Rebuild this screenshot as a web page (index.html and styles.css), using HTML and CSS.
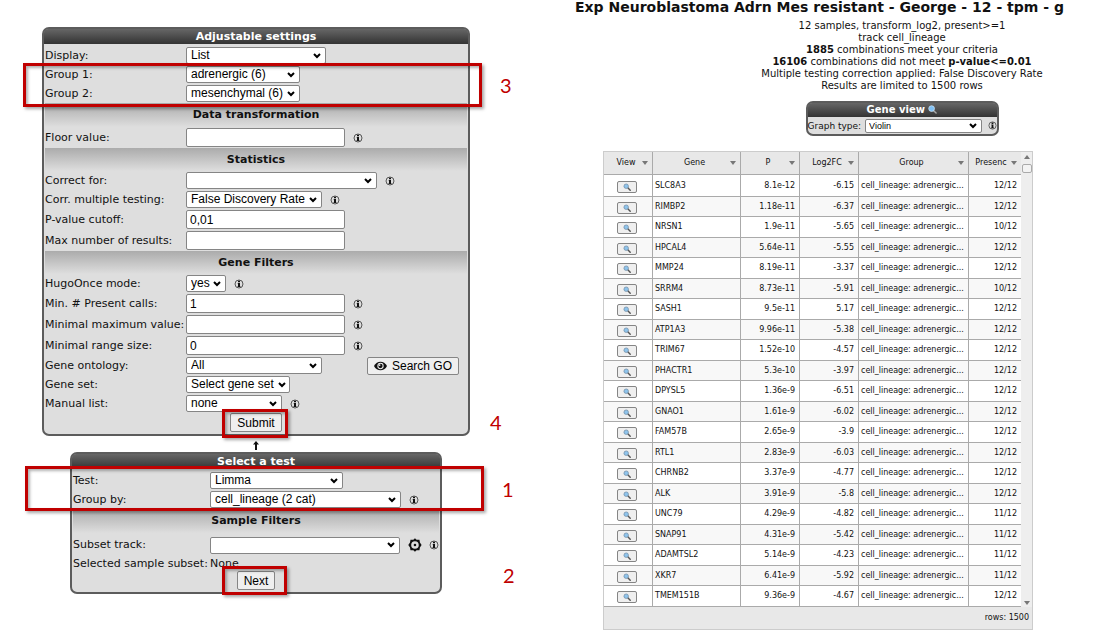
FILE: index.html
```html
<!DOCTYPE html>
<html lang="en">
<head>
<meta charset="utf-8">
<title>Exp Neuroblastoma Adrn Mes resistant</title>
<link rel="stylesheet" href="styles.css">
</head>
<body>
<svg class="defs" aria-hidden="true">
  <symbol id="info" viewBox="0 0 10 10"><circle cx="5" cy="5" r="4" fill="none" stroke="#555" stroke-width="1"/><path d="M4 1.800h2v1.400H4zM3.700 4H6v3.300h.5V8h-3v-.7H4V4.700h-.3z" fill="#111"/></symbol>
  <symbol id="lens" viewBox="0 0 10 10"><path d="M6 6l3 3" stroke="#555" stroke-width="1.800" stroke-linecap="round"/><circle cx="4" cy="4" r="2.800" fill="#8fc4ec" stroke="#6f8ba3" stroke-width=".9"/></symbol>
  <symbol id="lens-light" viewBox="0 0 10 10"><path d="M6 6l3 3" stroke="#a8a8a8" stroke-width="1.600" stroke-linecap="round"/><circle cx="4" cy="4" r="3.200" fill="#7fc0f4" stroke="#cfe4f5" stroke-width=".8"/></symbol>
</svg>
<main class="page">
  <div class="left">
    <form class="panel settings">
      <h2 class="panel-title">Adjustable settings</h2>
      <div class="rows">
        <div class="row"><label for="display">Display:</label><select id="display" class="w140"><option>List</option></select></div>
        <div class="row"><label for="g1">Group 1:</label><select id="g1" class="w114"><option>adrenergic (6)</option></select></div>
        <div class="row"><label for="g2">Group 2:</label><select id="g2" class="w114"><option>mesenchymal (6)</option></select></div>
        <h3 class="after-mark">Data transformation</h3>
        <div class="row tall"><label for="floor">Floor value:</label><input id="floor" type="text"><svg class="info"><use href="#info"/></svg></div>
        <h3>Statistics</h3>
        <div class="row"><label for="correct">Correct for:</label><select id="correct" class="w191"><option></option></select><svg class="info"><use href="#info"/></svg></div>
        <div class="row"><label for="corr">Corr. multiple testing:</label><select id="corr" class="w136"><option>False Discovery Rate</option></select><svg class="info"><use href="#info"/></svg></div>
        <div class="row tall"><label for="pval">P-value cutoff:</label><input id="pval" type="text" value="0,01"></div>
        <div class="row tall"><label for="max">Max number of results:</label><input id="max" type="text"></div>
        <h3>Gene Filters</h3>
        <div class="row"><label for="hugo">HugoOnce mode:</label><select id="hugo" class="w40"><option>yes</option></select><svg class="info"><use href="#info"/></svg></div>
        <div class="row tall"><label for="calls">Min. # Present calls:</label><input id="calls" type="text" value="1"><svg class="info"><use href="#info"/></svg></div>
        <div class="row tall"><label for="minmax">Minimal maximum value:</label><input id="minmax" type="text"><svg class="info"><use href="#info"/></svg></div>
        <div class="row tall"><label for="range">Minimal range size:</label><input id="range" type="text" value="0"><svg class="info"><use href="#info"/></svg></div>
        <div class="row"><label for="go">Gene ontology:</label><select id="go" class="w136"><option>All</option></select>
          <button type="button" class="search"><svg viewBox="0 0 14 10"><path d="M0 5C3-1.200 11-1.200 14 5 11 11.200 3 11.200 0 5z" fill="#111"/><circle cx="7" cy="5" r="3.400" fill="#eee"/><circle cx="7" cy="5" r="2.300" fill="#111"/><circle cx="6" cy="4" r="1" fill="#eee"/></svg>Search GO</button></div>
        <div class="row"><label for="set">Gene set:</label><select id="set" class="w104"><option>Select gene set</option></select></div>
        <div class="row"><label for="manual">Manual list:</label><select id="manual" class="w96"><option>none</option></select><svg class="info"><use href="#info"/></svg></div>
        <div class="actions"><button type="submit">Submit</button></div>
      </div>
      <div class="mark mark-groups"><span>3</span></div>
      <div class="mark mark-submit"><span>4</span></div>
    </form>
    <svg class="arrow" viewBox="0 0 6 9"><path d="M3 0l3 3.500H4V9H2V3.500H0z" fill="#111"/></svg>
    <form class="panel test">
      <h2 class="panel-title">Select a test</h2>
      <div class="rows">
        <div class="row"><label for="test">Test:</label><select id="test" class="w133"><option>Limma</option></select></div>
        <div class="row"><label for="by">Group by:</label><select id="by" class="w191"><option>cell_lineage (2 cat)</option></select><svg class="info"><use href="#info"/></svg></div>
        <h3 class="after-mark">Sample Filters</h3>
        <div class="row subset"><label for="subset">Subset track:</label><select id="subset" class="w191"><option></option></select>
          <svg class="gear" viewBox="0 0 14 14"><path d="M7 .3l1.600 1.500 2.900 0 .5 2.800L13.700 7l-1.700 2.400-.5 2.800-2.900 0L7 13.700l-1.600-1.500-2.900 0L2 9.400.3 7 2 4.600l.5-2.800 2.900 0z" fill="#111"/><circle cx="7" cy="7" r="3.800" fill="#ddd"/><circle cx="7" cy="7" r="1.300" fill="#111"/></svg>
          <svg class="info near"><use href="#info"/></svg></div>
        <div class="row short"><span class="name">Selected sample subset:</span><span>None</span></div>
        <div class="actions"><button type="submit">Next</button></div>
      </div>
      <div class="mark mark-test"><span>1</span></div>
      <div class="mark mark-next"><span>2</span></div>
    </form>
  </div>
  <section class="right">
    <h1>Exp Neuroblastoma Adrn Mes resistant - George - 12 - tpm - g</h1>
    <div class="summary">
      <p>12 samples, transform_log2, present&gt;=1<br>track cell_lineage<br><b>1885</b> combinations meet your criteria<br><b>16106</b> combinations did not meet <b>p-value&lt;=0.01</b><br>Multiple testing correction applied: False Discovery Rate<br>Results are limited to 1500 rows</p>
      <div class="panel view">
        <h2 class="panel-title">Gene view <svg class="lens"><use href="#lens-light"/></svg></h2>
        <div class="row"><label for="graph">Graph type:</label><select id="graph"><option>Violin</option></select><svg class="info"><use href="#info"/></svg></div>
      </div>
    </div>
    <div class="grid">
      <div class="grid-body">
        <table>
          <colgroup><col class="c-view"><col class="c-gene"><col class="c-num"><col class="c-num"><col class="c-group"><col class="c-pres"></colgroup>
          <thead><tr><th><div>View</div></th><th><div>Gene</div></th><th><div>P</div></th><th><div>Log2FC</div></th><th><div>Group</div></th><th><div>Presenc</div></th></tr></thead>
          <tbody>
<tr><td><button aria-label="View"><svg><use href="#lens"/></svg></button></td><td>SLC8A3</td><td>8.1e-12</td><td>-6.15</td><td>cell_lineage: adrenergic...</td><td>12/12</td></tr>
<tr><td><button aria-label="View"><svg><use href="#lens"/></svg></button></td><td>RIMBP2</td><td>1.18e-11</td><td>-6.37</td><td>cell_lineage: adrenergic...</td><td>12/12</td></tr>
<tr><td><button aria-label="View"><svg><use href="#lens"/></svg></button></td><td>NRSN1</td><td>1.9e-11</td><td>-5.65</td><td>cell_lineage: adrenergic...</td><td>10/12</td></tr>
<tr><td><button aria-label="View"><svg><use href="#lens"/></svg></button></td><td>HPCAL4</td><td>5.64e-11</td><td>-5.55</td><td>cell_lineage: adrenergic...</td><td>12/12</td></tr>
<tr><td><button aria-label="View"><svg><use href="#lens"/></svg></button></td><td>MMP24</td><td>8.19e-11</td><td>-3.37</td><td>cell_lineage: adrenergic...</td><td>12/12</td></tr>
<tr><td><button aria-label="View"><svg><use href="#lens"/></svg></button></td><td>SRRM4</td><td>8.73e-11</td><td>-5.91</td><td>cell_lineage: adrenergic...</td><td>10/12</td></tr>
<tr><td><button aria-label="View"><svg><use href="#lens"/></svg></button></td><td>SASH1</td><td>9.5e-11</td><td>5.17</td><td>cell_lineage: adrenergic...</td><td>12/12</td></tr>
<tr><td><button aria-label="View"><svg><use href="#lens"/></svg></button></td><td>ATP1A3</td><td>9.96e-11</td><td>-5.38</td><td>cell_lineage: adrenergic...</td><td>12/12</td></tr>
<tr><td><button aria-label="View"><svg><use href="#lens"/></svg></button></td><td>TRIM67</td><td>1.52e-10</td><td>-4.57</td><td>cell_lineage: adrenergic...</td><td>12/12</td></tr>
<tr><td><button aria-label="View"><svg><use href="#lens"/></svg></button></td><td>PHACTR1</td><td>5.3e-10</td><td>-3.97</td><td>cell_lineage: adrenergic...</td><td>12/12</td></tr>
<tr><td><button aria-label="View"><svg><use href="#lens"/></svg></button></td><td>DPYSL5</td><td>1.36e-9</td><td>-6.51</td><td>cell_lineage: adrenergic...</td><td>12/12</td></tr>
<tr><td><button aria-label="View"><svg><use href="#lens"/></svg></button></td><td>GNAO1</td><td>1.61e-9</td><td>-6.02</td><td>cell_lineage: adrenergic...</td><td>12/12</td></tr>
<tr><td><button aria-label="View"><svg><use href="#lens"/></svg></button></td><td>FAM57B</td><td>2.65e-9</td><td>-3.9</td><td>cell_lineage: adrenergic...</td><td>12/12</td></tr>
<tr><td><button aria-label="View"><svg><use href="#lens"/></svg></button></td><td>RTL1</td><td>2.83e-9</td><td>-6.03</td><td>cell_lineage: adrenergic...</td><td>12/12</td></tr>
<tr><td><button aria-label="View"><svg><use href="#lens"/></svg></button></td><td>CHRNB2</td><td>3.37e-9</td><td>-4.77</td><td>cell_lineage: adrenergic...</td><td>12/12</td></tr>
<tr><td><button aria-label="View"><svg><use href="#lens"/></svg></button></td><td>ALK</td><td>3.91e-9</td><td>-5.8</td><td>cell_lineage: adrenergic...</td><td>12/12</td></tr>
<tr><td><button aria-label="View"><svg><use href="#lens"/></svg></button></td><td>UNC79</td><td>4.29e-9</td><td>-4.82</td><td>cell_lineage: adrenergic...</td><td>11/12</td></tr>
<tr><td><button aria-label="View"><svg><use href="#lens"/></svg></button></td><td>SNAP91</td><td>4.31e-9</td><td>-5.42</td><td>cell_lineage: adrenergic...</td><td>11/12</td></tr>
<tr><td><button aria-label="View"><svg><use href="#lens"/></svg></button></td><td>ADAMTSL2</td><td>5.14e-9</td><td>-4.23</td><td>cell_lineage: adrenergic...</td><td>11/12</td></tr>
<tr><td><button aria-label="View"><svg><use href="#lens"/></svg></button></td><td>XKR7</td><td>6.41e-9</td><td>-5.92</td><td>cell_lineage: adrenergic...</td><td>11/12</td></tr>
<tr><td><button aria-label="View"><svg><use href="#lens"/></svg></button></td><td>TMEM151B</td><td>9.36e-9</td><td>-4.67</td><td>cell_lineage: adrenergic...</td><td>12/12</td></tr>
          </tbody>
        </table>
        <div class="scroll"><i class="up"></i><i class="thumb"></i><i class="down"></i></div>
      </div>
      <div class="grid-foot">rows: 1500</div>
    </div>
  </section>
</main>
</body>
</html>
```
FILE: styles.css
```css
* { box-sizing: border-box; }
body { margin: 0; background: #fff; color: #111; font: 11px/14px "DejaVu Sans", Verdana, sans-serif; }
h1, h2, h3, p { margin: 0; }
.defs { position: absolute; width: 0; height: 0; }
.page { display: flex; }
.left { flex: 0 0 512px; padding-top: 27px; display: flex; flex-direction: column; align-items: center; }

.panel { position: relative; border: 2px solid #5c5c5c; border-radius: 7px; background: #dedede; }
.panel-title { height: 15px; font-size: 11px; line-height: 15px; text-align: center; color: #fff; background: linear-gradient(#666, #333); border-radius: 4px 4px 0 0; }
.settings { width: 428px; }
.test { width: 372px; }
.rows { padding: 2px 1px; }
.row { display: flex; align-items: center; height: 19px; white-space: nowrap; }
.row.tall { height: 21px; }
.row.subset { height: 24px; }
.row.short { height: 14px; }
.row label, .row .name { flex: 0 0 141px; }
.test .row label, .test .row .name { flex-basis: 137px; }
h3 { height: 23px; font-size: 11px; line-height: 23px; text-align: center; background: linear-gradient(#ababab, #dedede); }
h3.after-mark { height: 24px; }
.info { width: 10px; height: 10px; margin-left: 8px; flex: none; }
.info.near { margin-left: 7px; }
.gear { width: 14px; height: 14px; margin-left: 8px; }

select, input, button { font: 12px/14px "Liberation Sans", Arial, sans-serif; color: #000; border: 1px solid #858585; border-radius: 2px; margin: 0; }
select { height: 17px; padding: 0 14px 0 4px; line-height: 15px; appearance: none; background: #fff url("data:image/svg+xml,%3Csvg xmlns='http://www.w3.org/2000/svg' width='8' height='6'%3E%3Cpath d='M1 1l3 3 3-3' fill='none' stroke='%23000' stroke-width='2'/%3E%3C/svg%3E") no-repeat right 4px center; }
input { width: 159px; height: 19px; padding: 0 3px; background: #fff; }
button { padding: 0 6px; background: #efefef; }
.w40 { width: 40px; } .w96 { width: 96px; } .w104 { width: 104px; } .w114 { width: 114px; }
#set { background-position: right 3px center; padding-right: 12px; }
.w133 { width: 133px; } .w136 { width: 136px; } .w140 { width: 140px; } .w191 { width: 191px; }
.search { display: flex; align-items: center; gap: 5px; height: 18px; margin-left: auto; margin-right: 8px; }
.search svg { width: 13px; height: 10px; }
.actions { display: flex; justify-content: center; }
.actions button { height: 19px; }
.arrow { width: 6px; height: 9px; margin: 5px 0 2px; }

.mark { position: absolute; border: 3px solid #c00000; box-shadow: 2px 2px 3px rgba(0,0,0,.35), inset 2px 2px 3px rgba(0,0,0,.3); pointer-events: none; }
.mark span { position: absolute; top: 50%; font: 20px/24px Lato, Carlito, sans-serif; color: #c00000; margin-top: -12px; }
.mark-groups { left: -21px; top: 34px; width: 459px; height: 44px; }
.mark-submit { left: 178px; top: 380px; width: 66px; height: 29px; }
.mark-test { left: -47px; top: 12px; width: 459px; height: 45px; }
.mark-next { left: 150px; top: 112px; width: 65px; height: 29px; }
.mark-groups span, .mark-test span { left: calc(100% + 21px); }
.mark-submit span { left: calc(100% + 205px); margin-top: -14px; }
.mark-next span { left: calc(100% + 219px); margin-top: -18px; }

.right { flex: 1; min-width: 0; margin: 0 31px 0 63px; overflow: hidden; }
h1 { font-size: 14px; line-height: 14px; padding-bottom: 2px; white-space: nowrap; }
.summary { padding: 4px 0 0 143px; display: flex; flex-direction: column; align-items: center; text-align: center; font-size: 10px; white-space: nowrap; }
.summary p { line-height: 12px; }
.view { width: 193px; margin-top: 9px; text-align: left; }
.view .panel-title { font-size: 10px; height: 14px; line-height: 14px; }
.view .row { height: 17px; }
.view .row label { flex: none; font-size: 9px; }
.view select { flex: 1; height: 14px; font-size: 9px; line-height: 12px; margin-left: 4px; padding-left: 3px; }
.view .info { width: 9px; height: 9px; margin-left: 6px; }
.lens { width: 9px; height: 9px; vertical-align: -1px; }

.grid { width: 430px; margin: 15px 0 0 28px; border: 1px solid #ccc; background: #e8e8e8; font-size: 8px; line-height: 12px; }
.grid-body { display: flex; }
table { flex: 1; border-collapse: separate; border-spacing: 0; table-layout: fixed; width: 416px; }
.c-view { width: 49px; } .c-gene { width: 88px; } .c-num { width: 59px; } .c-group { width: 110px; } .c-pres { width: 52px; }
th, td { padding: 0 4px 0 2px; border: solid #aaa; border-width: 0 1px 1px 0; text-align: right; white-space: nowrap; overflow: hidden; }
th:last-child, td:last-child { border-right: 0; }
th { height: 23px; padding: 0 4px; font-weight: normal; background: #e8e8e8; }
th div { display: flex; justify-content: center; align-items: center; position: relative; padding-right: 4px; }
th:last-child div { padding-right: 8px; }
th div::after { content: ""; position: absolute; right: 0; border: 3px solid transparent; border-top: 4px solid #777; border-bottom: 0; }
td { background: #fff; }
tbody tr { height: 21px; }
tbody tr:nth-child(even) { height: 20px; }
tbody tr:first-child { height: 22px; }
tbody tr:nth-child(even) td { background: #f8f8f8; }
td:first-child { text-align: center; }
td:nth-child(2), td:nth-child(5) { text-align: left; }
td button { display: block; width: 20px; height: 12px; margin: 2px auto 0; padding: 0; line-height: 0; }
td button svg { width: 8px; height: 8px; }
.scroll { width: 12px; display: flex; flex-direction: column; align-items: center; background: #eee; padding: 3px 0 2px; }
.up, .down { border: 3px solid transparent; }
.up { border-top: 0; border-bottom: 4px solid #777; }
.down { border-bottom: 0; border-top: 4px solid #777; margin-top: auto; }
.thumb { width: 10px; height: 9px; margin-top: 5px; border: 1px solid #aaa; border-radius: 2px; background: #f3f3f3; }
.grid-foot { padding: 5px 3px; text-align: right; }
```
